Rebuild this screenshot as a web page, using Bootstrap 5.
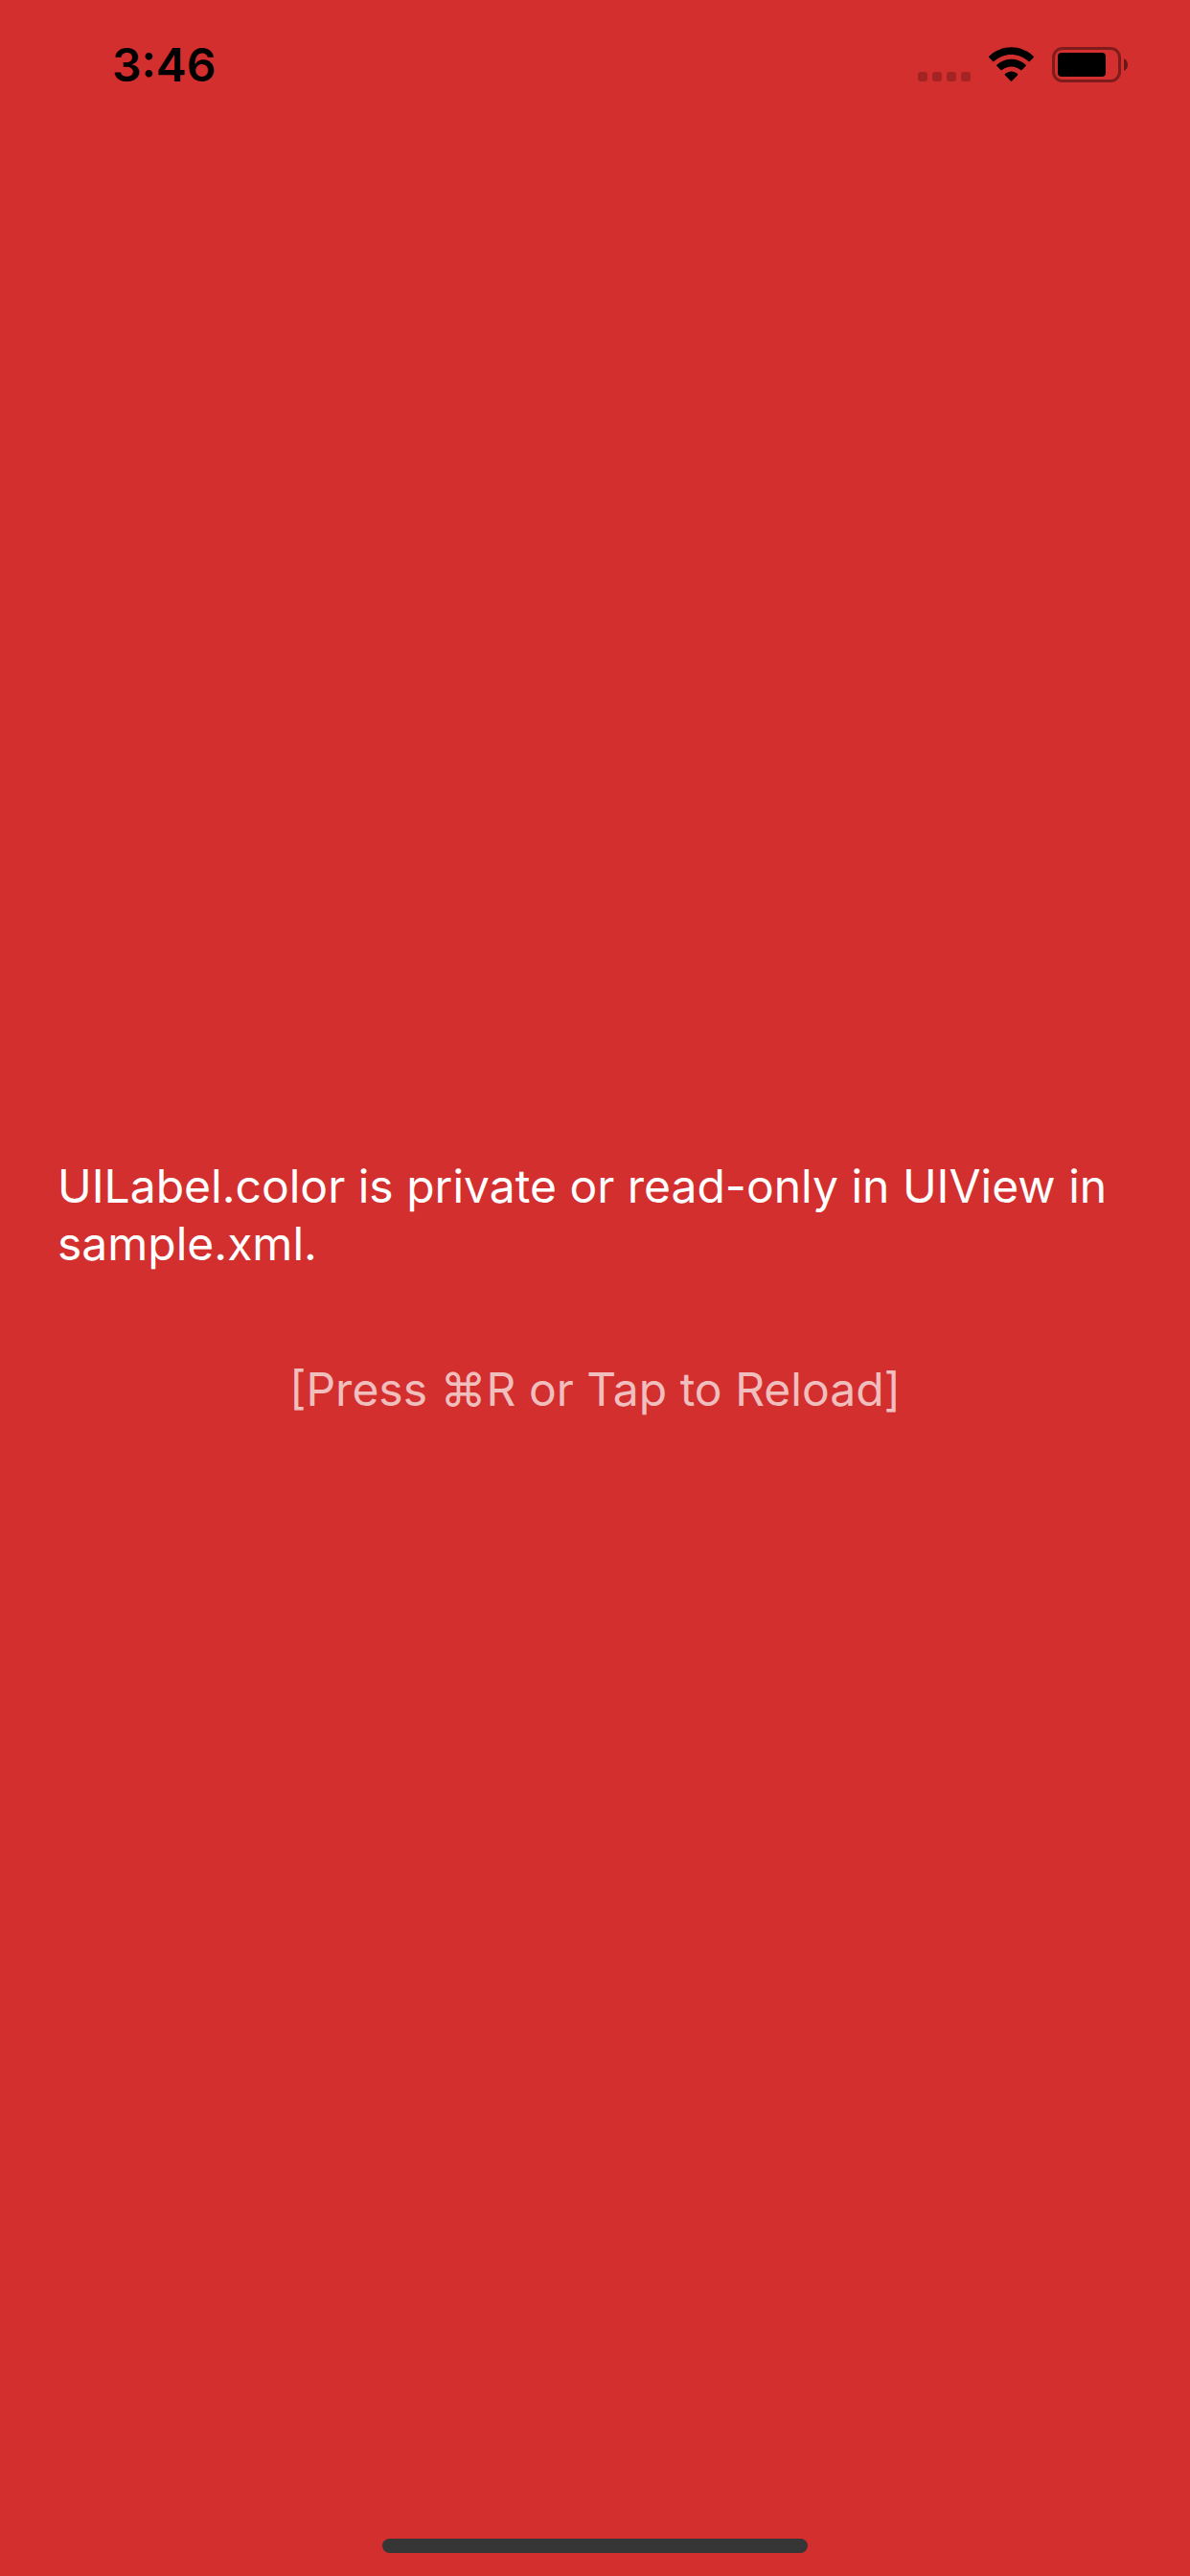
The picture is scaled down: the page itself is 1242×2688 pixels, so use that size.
<!DOCTYPE html>
<html lang="en">
<head>
<meta charset="utf-8">
<meta name="viewport" content="width=device-width, initial-scale=1">
<title>Error</title>
<link rel="stylesheet" href="https://cdn.jsdelivr.net/npm/bootstrap@5.3.0/dist/css/bootstrap.min.css">
<style>
  body { background: #d32f2f; font-family: Inter, "DejaVu Sans", sans-serif; font-size: 48px; line-height: 60px; }
  .edge-bar { height: 135px; }
  .status-bar { padding: 0 65px 0 117px; color: #000; }
  .clock { font-weight: 600; }
  .status-icons { gap: 19px; }
  .error-body { gap: 92px; padding: 0 60px; }
  .reload, .reload:hover { color: rgba(255, 255, 255, .7); font-size: 48px; line-height: 60px; }
  .home-area { padding-bottom: 24px; }
  .home-indicator { width: 444px; height: 15px; background: #363636; }
</style>
</head>
<body>
<div class="d-flex flex-column min-vh-100">
  <header class="edge-bar status-bar d-flex align-items-center justify-content-between">
    <time class="clock">3:46</time>
    <div class="status-icons d-flex align-items-center">
      <svg width="55" height="37" viewBox="0 0 55 37" fill="#000" fill-opacity=".22" role="img" aria-label="No signal">
        <rect x="0" y="26" width="10" height="10" rx="3"/>
        <rect x="15" y="26" width="10" height="10" rx="3"/>
        <rect x="30" y="26" width="10" height="10" rx="3"/>
        <rect x="45" y="26" width="10" height="10" rx="3"/>
      </svg>
      <svg width="47" height="37" viewBox="0 0 47 37" role="img" aria-label="Wi-Fi">
        <path d="M.3 9.7C13.5-3 33.500-3 46.700 9.700Q47.300 10.300 46.700 11L42.800 15Q42.200 15.500 41.600 15C31 5.600 16 5.600 5.400 15Q4.800 15.500 4.200 15L.3 11Q-.3 10.300.3 9.700Z"/>
        <path d="M8.500 18.500C17 10.800 30 10.800 38.500 18.500Q39.200 19.200 38.500 19.900L34.500 24Q33.900 24.600 33.200 24C27.500 19.300 19.500 19.300 13.800 24Q13.100 24.600 12.500 24L8.500 19.900Q7.800 19.200 8.500 18.500Z"/>
        <path d="M17 28C20.800 24.500 26.200 24.500 30 28Q30.600 28.700 30 29.400L24.200 35.500Q23.500 36.200 22.800 35.500L17 29.400Q16.400 28.700 17 28Z"/>
      </svg>
      <svg width="79" height="37" viewBox="0 0 79 37" role="img" aria-label="Battery">
        <rect x="1.500" y="1.500" width="69" height="34" rx="9.500" fill="none" stroke="#000" stroke-opacity=".4" stroke-width="3"/>
        <rect x="6" y="6" width="50" height="25" rx="4"/>
        <path d="M75 12Q79 14 79 18.500Q79 23 75 25Z" fill-opacity=".5"/>
      </svg>
    </div>
  </header>
  <main class="error-body flex-grow-1 d-flex flex-column justify-content-center">
    <p class="text-white m-0">UILabel.color is private or read-only in UIView in sample.xml.</p>
    <button type="button" class="reload btn border-0 p-0 align-self-center">[Press ⌘R or Tap to Reload]</button>
  </main>
  <footer class="edge-bar home-area d-flex align-items-end justify-content-center">
    <div class="home-indicator rounded-pill"></div>
  </footer>
</div>
<script src="https://cdn.jsdelivr.net/npm/bootstrap@5.3.0/dist/js/bootstrap.bundle.min.js"></script>
</body>
</html>
